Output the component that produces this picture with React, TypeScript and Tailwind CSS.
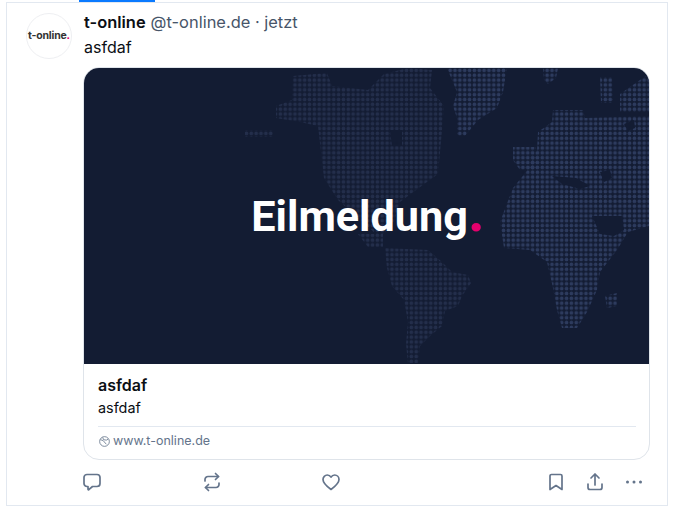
import React from 'react';

const font = "font-['Inter','Liberation_Sans',sans-serif]";

// continents as rough polygons, filled with the dot pattern (page coordinates)
const americas = [
  '245,130 273,130 273,137 245,137',
  '293,76 327,73 332,86 368,90 384,74 408,68 432,70 430,88 444,106 442,130 438,174 416,190 400,202 394,222 384,234 376,234 356,216 338,200 324,178 318,126 300,122 276,118 276,106 292,100',
  '358,234 383,234 383,247 368,247',
  '385,248 428,250 442,262 452,272 468,275 471,283 462,296 458,306 445,311 442,326 430,336 420,346 418,363 408,363 406,344 408,322 404,300 392,286 387,268',
];

const oldWorld = [
  '447,68 507,68 503,92 497,108 478,120 465,136 457,136 457,118 453,106 457,92',
  '543,68 558,68 556,78 548,84 544,80',
  '600,77 612,77 613,103 601,103',
  '620,94 640,80 649,74 649,112 620,112',
  '513,147 536,147 537,170 520,170 513,160',
  '553,110 583,110 585,118 649,116 649,226 628,232 617,250 600,272 597,290 587,312 577,328 562,328 557,310 553,288 547,262 530,250 504,248 500,222 513,188 526,172 537,150 538,132 552,122',
  '605,296 617,293 617,306 607,308',
];

const seas = [
  '390,130 402,130 402,146 392,146',
  '552,176 576,178 590,186 580,189 562,184',
  '600,172 610,170 612,178 604,182',
  '592,216 622,216 624,230 614,236 600,234',
  '624,124 634,120 635,128 628,131',
];

function WorldDots() {
  return (
    <svg className="absolute inset-0 h-full w-full" viewBox="84 68 565 296" preserveAspectRatio="none">
      <defs>
        <pattern id="dotsDim" x="84" y="68" width="4.85" height="4.85" patternUnits="userSpaceOnUse">
          <circle cx="2.4" cy="2.4" r="1.8" fill="#232e4b" />
        </pattern>
        <pattern id="dots" x="84" y="68" width="4.85" height="4.85" patternUnits="userSpaceOnUse">
          <circle cx="2.4" cy="2.4" r="1.8" fill="#2d3b5e" />
        </pattern>
      </defs>
      {americas.map((points) => (
        <polygon key={points} points={points} fill="url(#dotsDim)" />
      ))}
      {oldWorld.map((points) => (
        <polygon key={points} points={points} fill="url(#dots)" />
      ))}
      {seas.map((points) => (
        <polygon key={points} points={points} fill="#131c33" />
      ))}
    </svg>
  );
}

function ReplyIcon() {
  return (
    <svg width="20" height="20" viewBox="0 0 20 20" fill="none" stroke="#64748b" strokeWidth="1.7" strokeLinejoin="round" strokeLinecap="round">
      <path d="M5 2.500h10a3 3 0 0 1 3 3v6a3 3 0 0 1-3 3h-4.500l-3.700 3.200a.5.5 0 0 1-.8-.4V14.500H5a3 3 0 0 1-3-3v-6a3 3 0 0 1 3-3z" />
    </svg>
  );
}

function RepostIcon() {
  return (
    <svg width="20" height="20" viewBox="0 0 20 20" fill="none" stroke="#64748b" strokeWidth="1.7" strokeLinejoin="round" strokeLinecap="round">
      <path d="M13.500 1.500l3 3-3 3" />
      <path d="M16.500 4.500H6a3 3 0 0 0-3 3V9" />
      <path d="M6.500 18.500l-3-3 3-3" />
      <path d="M3.500 15.500H14a3 3 0 0 0 3-3V11" />
    </svg>
  );
}

function HeartIcon() {
  return (
    <svg width="20" height="20" viewBox="0 0 20 20" fill="none" stroke="#64748b" strokeWidth="1.7" strokeLinejoin="round" strokeLinecap="round">
      <path d="M10 17.500C6 14.500 2 11.500 2 7.500 2 5 4 3 6.300 3 7.900 3 9.200 3.800 10 5.200 10.800 3.800 12.100 3 13.700 3 16 3 18 5 18 7.500c0 4-4 7-8 10z" />
    </svg>
  );
}

function BookmarkIcon() {
  return (
    <svg width="20" height="20" viewBox="0 0 20 20" fill="none" stroke="#64748b" strokeWidth="1.7" strokeLinejoin="round" strokeLinecap="round">
      <path d="M5.500 2.500h9a1.500 1.500 0 0 1 1.500 1.500v13.500l-6-4-6 4V4a1.500 1.500 0 0 1 1.500-1.500z" />
    </svg>
  );
}

function ShareIcon() {
  return (
    <svg width="20" height="20" viewBox="0 0 20 20" fill="none" stroke="#64748b" strokeWidth="1.7" strokeLinejoin="round" strokeLinecap="round">
      <path d="M10 13V2.500" />
      <path d="M6 6l4-4 4 4" />
      <path d="M3 12v3.500A2 2 0 0 0 5 17.500h10a2 2 0 0 0 2-2V12" />
    </svg>
  );
}

function MoreIcon() {
  return (
    <svg width="20" height="20" viewBox="0 0 20 20" fill="#64748b">
      <circle cx="3.500" cy="10" r="1.500" />
      <circle cx="10" cy="10" r="1.500" />
      <circle cx="16.500" cy="10" r="1.500" />
    </svg>
  );
}

function GlobeIcon() {
  return (
    <svg width="11" height="11" viewBox="0 0 12 12" fill="none" stroke="#64748b" strokeWidth="0.9">
      <circle cx="6" cy="6" r="5.300" />
      <path d="M1.500 4l3 1 3.500 4M4 1.500l1 2.500 3 .5 2-1" />
    </svg>
  );
}

export default function App() {
  return (
    <main className={`h-[514px] w-[678px] overflow-hidden bg-white ${font}`}>
      <div className="ml-[79px] h-[2px] w-[76px] bg-[#0a7aff]" />
      <article className="ml-[6px] h-[504px] w-[662px] border border-[#e2e8f0] bg-white">
        <div className="flex pl-[19px] pr-[17px]">
          <div className="mt-[10px] flex h-[46px] w-[46px] shrink-0 items-center justify-center rounded-full border border-[#eeeff2] bg-white text-[10.500px] font-bold tracking-[-0.2px] text-[#333]">
            t-online<span className="text-[#e5006d]">.</span>
          </div>
          <div className="ml-[11px] min-w-0 flex-1">
            <div className="flex h-[24px] items-center gap-[5px] pl-[1px] pt-[14px] text-[16.450px] leading-[24px]">
              <span className="font-semibold text-[#0b0f14]">t-online</span>
              <span className="text-[#475569]">@t-online.de · jetzt</span>
            </div>
            <p className="mt-[1px] pl-[1px] pt-[7px] text-[16px] leading-[24px] text-[#0b0f14]">asfdaf</p>
            <div className="mt-[8px] h-[393px] overflow-hidden rounded-[16px] border border-[#dfe4ea]">
              <div className="relative flex h-[296px] items-center justify-center bg-[#131c33]">
                <WorldDots />
                <span className="relative ml-[3px] mt-[2px] font-['Roboto',sans-serif] text-[43.200px] leading-none font-bold text-white">
                  Eilmeldung<span className="text-[58px] leading-[0] text-[#e5006d]">.</span>
                </span>
              </div>
              <div className="pl-[14px] pr-[13px] pt-[11px]">
                <h2 className="text-[16px] leading-[20px] font-semibold text-[#0b0f14]">asfdaf</h2>
                <p className="mt-[3px] text-[14.400px] leading-[20px] text-[#0b0f14]">asfdaf</p>
                <div className="mt-[8px] flex h-[29px] items-center gap-[3px] border-t border-[#e2e8f0] pl-[1px] pt-[1px] text-[12.500px] text-[#64748b]">
                  <GlobeIcon />
                  <span>www.t-online.de</span>
                </div>
              </div>
            </div>
            <div className="mt-[12px] flex items-center text-[#64748b]">
              <div className="w-[119px] -translate-x-px"><ReplyIcon /></div>
              <div className="w-[119px]"><RepostIcon /></div>
              <div className="w-[225px]"><HeartIcon /></div>
              <div className="w-[39px]"><BookmarkIcon /></div>
              <div className="w-[39px]"><ShareIcon /></div>
              <MoreIcon />
            </div>
          </div>
        </div>
      </article>
    </main>
  );
}
